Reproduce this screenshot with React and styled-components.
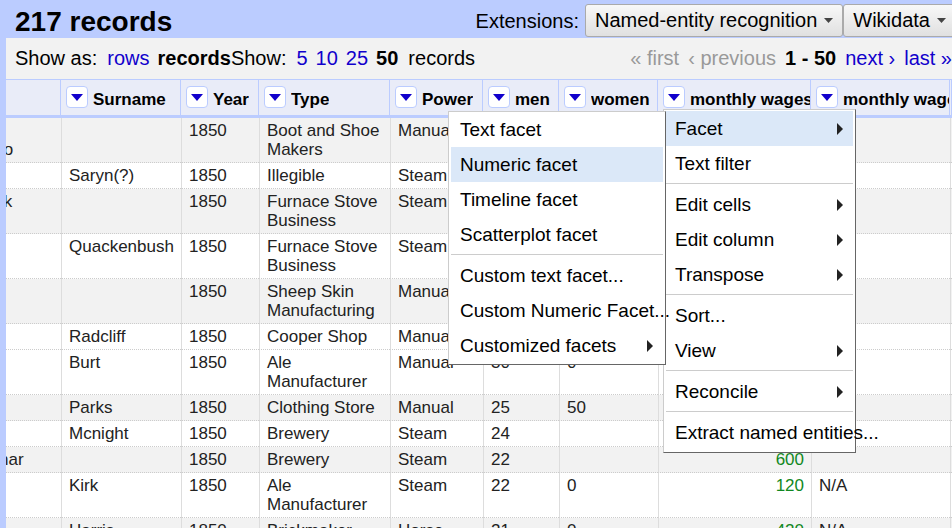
import React from "react";
import styled, { createGlobalStyle, css } from "styled-components";

const GlobalStyle = createGlobalStyle`
  *, *::before, *::after { box-sizing: border-box; }
  body {
    margin: 0;
    background: #bbccff;
    color: #000;
    font-family: "Liberation Sans", Arial, Helvetica, sans-serif;
    overflow: hidden;
  }
  button { font-family: inherit; color: inherit; cursor: pointer; }
`;

const Page = styled.main`
  display: flex;
  flex-direction: column;
  height: 100vh;
  padding-left: 6px;
  overflow: hidden;
  font-size: 20px;
  line-height: 24px;
  white-space: nowrap;
`;

const TopBar = styled.header`
  display: flex;
  flex: none;
  justify-content: space-between;
  height: 38px;
  padding: 4px 0 0 9px;
`;

const Title = styled.h1`
  margin: 0;
  font-size: 28px;
  line-height: 36px;
`;

const Extensions = styled.div`
  display: flex;
  align-items: center;
  height: 33px;
  margin-right: -4px;
`;

const ExtensionsLabel = styled.span`
  margin-right: 6px;
`;

const ExtensionButton = styled.button`
  display: flex;
  align-items: center;
  gap: 7px;
  height: 33px;
  padding: 0 9px 0 9px;
  border: 1px solid #aaa;
  border-radius: 3px;
  background: linear-gradient(#f8f8f8, #e0e0e0);
  font-size: 20px;
`;

const ViewBar = styled.div`
  display: flex;
  flex: none;
  justify-content: space-between;
  align-items: center;
  height: 41px;
  padding: 0 0 2px 9px;
  background: #f2f2f2;
`;

const ViewGroup = styled.div`
  display: flex;
`;

const Choices = styled.div`
  display: flex;
  gap: 8px;
`;

const ChoiceLabel = styled.span`
  margin-right: 10px;
`;

const Suffix = styled.span`
  margin-left: 10px;
`;

const Link = styled.a`
  color: #1100cc;
  text-decoration: none;
`;

const Pager = styled.nav`
  display: flex;
  gap: 9px;
`;

const Disabled = styled.span`
  color: #999;
`;

const GridPane = styled.div`
  flex: 1;
  min-height: 0;
  overflow: hidden;
  background: #fff;
`;

/* The grid is scrolled sideways, so its first column begins off the pane. */
const Grid = styled.table`
  width: calc(100% + 15px);
  margin-left: -15px;
  table-layout: fixed;
  border-collapse: separate;
  border-spacing: 0;
  font-size: 17px;
  line-height: 19px;
  color: #222;
`;

const Col = styled.col`
  width: ${(p) => (p.$w ? `${p.$w}px` : "auto")};
`;

const HeadCell = styled.th`
  height: 39px;
  padding: 0;
  border-top: 1px solid #bbccff;
  border-right: 1px solid #bbccff;
  border-bottom: 3px solid #bbccff;
  background: #e9ecf8;
  color: #000;
  text-align: left;
`;

const HeadInner = styled.div`
  position: relative;
  display: flex;
  gap: 5px;
  height: 35px;
  padding: 6px 0 0 5px;
`;

const HeadLabel = styled.span`
  min-width: 0;
  padding-top: 4px;
  overflow: hidden;
`;

const DropButton = styled.button`
  display: flex;
  flex: none;
  align-items: center;
  justify-content: center;
  width: 22px;
  height: 22px;
  padding: 0;
  border: 1px solid #bbccff;
  border-radius: 4px;
  background: #fff;
`;

const Row = styled.tr`
  background: ${(p) => (p.$shaded ? "#f2f2f2" : "#fff")};
`;

const Cell = styled.td`
  padding: 3px 7px;
  border-left: 1px solid #ddd;
  border-bottom: 1px dotted #ccc;
  vertical-align: top;
  white-space: ${(p) => (p.$wrap ? "normal" : "nowrap")};
  ${(p) =>
    p.$number &&
    css`
      color: #118822;
      text-align: right;
    `}
`;

const EdgeCell = styled(Cell)`
  padding: 0;
`;

const Menu = styled.ul`
  position: absolute;
  z-index: 2;
  width: ${(p) => p.$width}px;
  margin: 0;
  border: 1px solid;
  border-color: #ccc #666 #666 #ccc;
  background: #fff;
  list-style: none;
  color: #000;
  font-size: 19px;
  font-weight: normal;
`;

const ColumnMenu = styled(Menu)`
  top: 29px;
  left: 5px;
  padding: 1px 2px 2px;
`;

const SubMenu = styled(Menu)`
  top: 0;
  right: 100%;
  padding: 0 2px 1px;
`;

const MenuEntry = styled.li`
  position: relative;
`;

const MenuButton = styled.button`
  display: flex;
  align-items: center;
  justify-content: space-between;
  width: 100%;
  height: 35px;
  padding: 0 10px 0 9px;
  border: 0;
  background: ${(p) => (p.$active ? "#dbe8f8" : "transparent")};
  font-size: 19px;
  line-height: 24px;
  white-space: nowrap;
`;

const Separator = styled.li`
  height: 1px;
  margin: 2px 0 3px;
  background: #ccc;
`;

const Caret = ({ color, width, height }) => (
  <svg width={width} height={height} viewBox="0 0 12 7" preserveAspectRatio="none" aria-hidden="true">
    <path d="M0 0H12L6 7Z" fill={color} />
  </svg>
);

const Arrow = () => (
  <svg width="6" height="12" viewBox="0 0 6 12" aria-hidden="true">
    <path d="M0 0L6 6L0 12Z" fill="#222" />
  </svg>
);

const widths = [70, 120, 78, 131, 93, 76, 99, 153, 139];
const headings = ["Surname", "Year", "Type", "Power", "men", "women", "monthly wages", "monthly wages"];

const columnMenu = [
  { label: "Facet", sub: true, active: true },
  { label: "Text filter" },
  null,
  { label: "Edit cells", sub: true },
  { label: "Edit column", sub: true },
  { label: "Transpose", sub: true },
  null,
  { label: "Sort..." },
  { label: "View", sub: true },
  null,
  { label: "Reconcile", sub: true },
  null,
  { label: "Extract named entities..." },
];

const facetMenu = [
  { label: "Text facet" },
  { label: "Numeric facet", active: true },
  { label: "Timeline facet" },
  { label: "Scatterplot facet" },
  null,
  { label: "Custom text facet..." },
  { label: "Custom Numeric Facet..." },
  { label: "Customized facets", sub: true },
];

const rows = [
  [<><br />&nbsp;o</>, "", "1850", "Boot and Shoe Makers", "Manual", "", "", "", ""],
  ["", "Saryn(?)", "1850", "Illegible", "Steam", "", "", "", ""],
  ["\u00a0k", "", "1850", "Furnace Stove Business", "Steam", "", "", "", ""],
  ["", "Quackenbush", "1850", "Furnace Stove Business", "Steam", "", "", "", ""],
  ["", "", "1850", "Sheep Skin Manufacturing", "Manual", "", "", "", ""],
  ["", "Radcliff", "1850", "Cooper Shop", "Manual", "", "", "", ""],
  ["", "Burt", "1850", "Ale Manufacturer", "Manual", "30", "0", "", ""],
  ["", "Parks", "1850", "Clothing Store", "Manual", "25", "50", "", ""],
  ["", "Mcnight", "1850", "Brewery", "Steam", "24", "", "", ""],
  ["nar", "", "1850", "Brewery", "Steam", "22", "", "600", ""],
  ["", "Kirk", "1850", "Ale Manufacturer", "Steam", "22", "0", "120", "N/A"],
  ["", "Harris", "1850", "Brickmaker", "Horse", "21", "0", "420", "N/A"],
];
const shaded = [0, 2, 4, 7, 9, 11];

function MenuItems({ items, children }) {
  return items.map((item, i) =>
    item ? (
      <MenuEntry key={i} role="none">
        <MenuButton type="button" role="menuitem" $active={item.active}>
          {item.label}
          {item.sub && <Arrow />}
        </MenuButton>
        {i === 0 && children}
      </MenuEntry>
    ) : (
      <Separator key={i} role="separator" />
    )
  );
}

export default function App() {
  return (
    <>
      <GlobalStyle />
      <Page>
        <TopBar>
          <Title>217 records</Title>
          <Extensions>
            <ExtensionsLabel>Extensions:</ExtensionsLabel>
            {["Named-entity recognition", "Wikidata"].map((name) => (
              <ExtensionButton key={name} type="button">
                {name}
                <Caret color="#444" width={9} height={5} />
              </ExtensionButton>
            ))}
          </Extensions>
        </TopBar>

        <ViewBar>
          <ViewGroup>
            <ChoiceLabel>Show as:</ChoiceLabel>
            <Choices>
              <Link href="#rows">rows</Link>
              <b>records</b>
            </Choices>
            <ChoiceLabel>Show:</ChoiceLabel>
            <Choices>
              <Link href="#5">5</Link>
              <Link href="#10">10</Link>
              <Link href="#25">25</Link>
              <b>50</b>
            </Choices>
            <Suffix>records</Suffix>
          </ViewGroup>
          <Pager aria-label="Pages">
            <Disabled>« first</Disabled>
            <Disabled>‹ previous</Disabled>
            <b>1 - 50</b>
            <Link href="#next">next ›</Link>
            <Link href="#last">last »</Link>
          </Pager>
        </ViewBar>

        <GridPane>
          <Grid>
            <colgroup>
              {widths.map((w, i) => (
                <Col key={i} $w={w} />
              ))}
              <Col />
            </colgroup>
            <thead>
              <tr>
                <HeadCell />
                {headings.map((name, i) => (
                  <HeadCell key={i} scope="col">
                    <HeadInner>
                      <DropButton type="button" aria-label={`${name} column menu`}>
                        <Caret color="#1100cc" width={12} height={7} />
                      </DropButton>
                      <HeadLabel>{name}</HeadLabel>
                      {i === 6 && (
                        <ColumnMenu role="menu" $width={193}>
                          <MenuItems items={columnMenu}>
                            <SubMenu role="menu" $width={218}>
                              <MenuItems items={facetMenu} />
                            </SubMenu>
                          </MenuItems>
                        </ColumnMenu>
                      )}
                    </HeadInner>
                  </HeadCell>
                ))}
                <HeadCell />
              </tr>
            </thead>
            <tbody>
              {rows.map((row, r) => (
                <Row key={r} $shaded={shaded.includes(r)}>
                  {row.map((value, c) => (
                    <Cell key={c} $wrap={c === 3} $number={c === 7}>
                      {value}
                    </Cell>
                  ))}
                  <EdgeCell />
                </Row>
              ))}
            </tbody>
          </Grid>
        </GridPane>
      </Page>
    </>
  );
}
